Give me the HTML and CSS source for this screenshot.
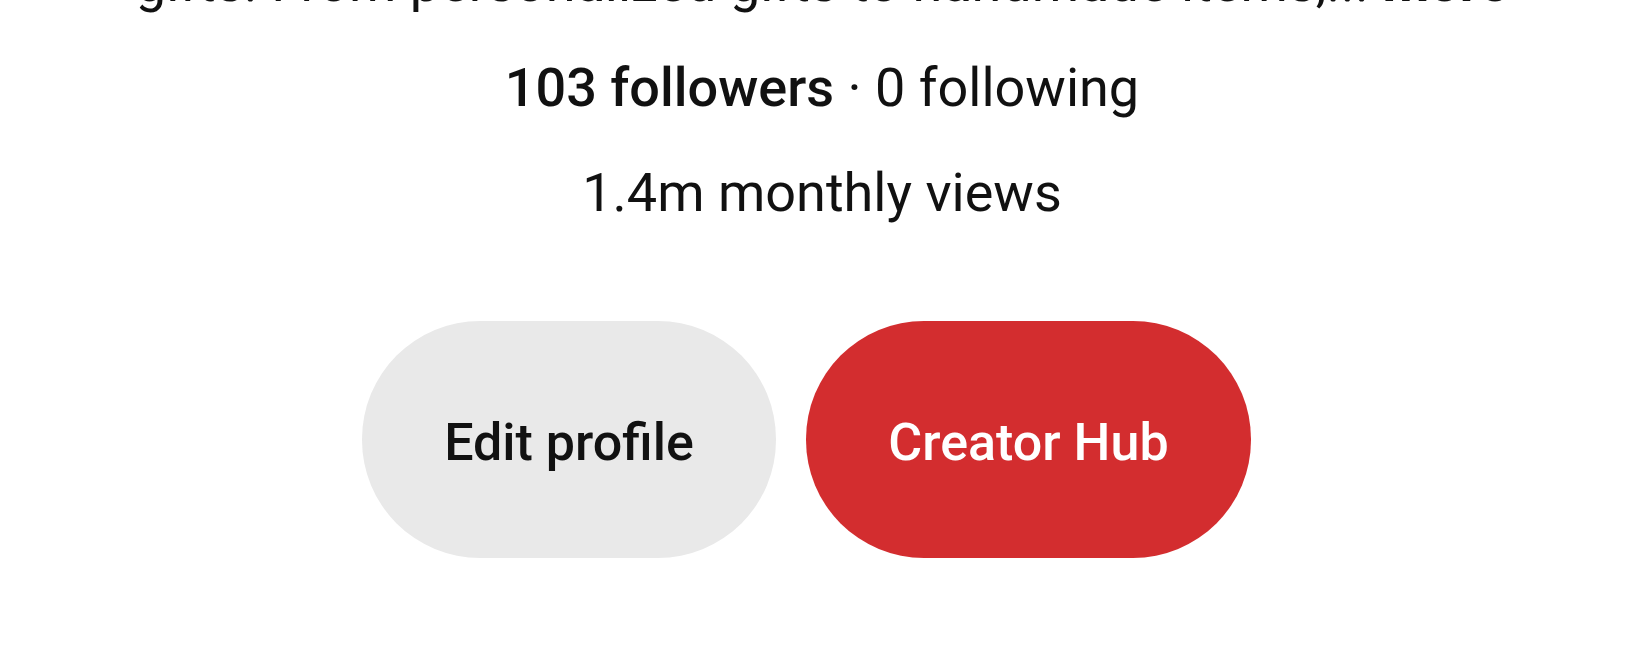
FILE: index.html
```html
<!DOCTYPE html>
<html lang="en">
<head>
<meta charset="utf-8">
<title>Profile</title>
<link rel="stylesheet" href="styles.css">
</head>
<body>
<main class="profile">
  <p class="about">gifts. From personalized gifts to handmade items,... <span class="more">more</span></p>
  <p class="stats"><span class="strong">103 followers</span> · 0 following</p>
  <p class="views">1.4m monthly views</p>
  <div class="actions">
    <button class="btn btn-secondary">Edit profile</button>
    <button class="btn btn-primary">Creator Hub</button>
  </div>
</main>
</body>
</html>
```

FILE: styles.css
```css
html, body {
  margin: 0;
  padding: 0;
  background: #ffffff;
}

body {
  font-family: Roboto, "Noto Sans", Arial, sans-serif;
  color: #111111;
  overflow: hidden;
}

.profile {
  display: flex;
  flex-direction: column;
  align-items: center;
  gap: 40px;
  margin-top: -50px;
}

.profile p {
  margin: 0;
  font-size: 54px;
  line-height: 65px;
  white-space: nowrap;
}

.about {
  font-weight: 400;
}

.more {
  font-weight: 700;
}

.strong {
  font-weight: 500;
}

.actions {
  display: flex;
  gap: 30px;
  margin-top: 56px;
  padding-right: 31px;
}

.btn {
  border: none;
  height: 237px;
  padding: 6px 0 0;
  border-radius: 118px;
  font-family: Roboto, "Noto Sans", Arial, sans-serif;
  font-size: 52px;
  font-weight: 500;
  cursor: pointer;
}

.btn-secondary {
  width: 414px;
  background: #e9e9e9;
  color: #111111;
}

.btn-primary {
  width: 445px;
  background: #d32d2f;
  color: #ffffff;
}
```
